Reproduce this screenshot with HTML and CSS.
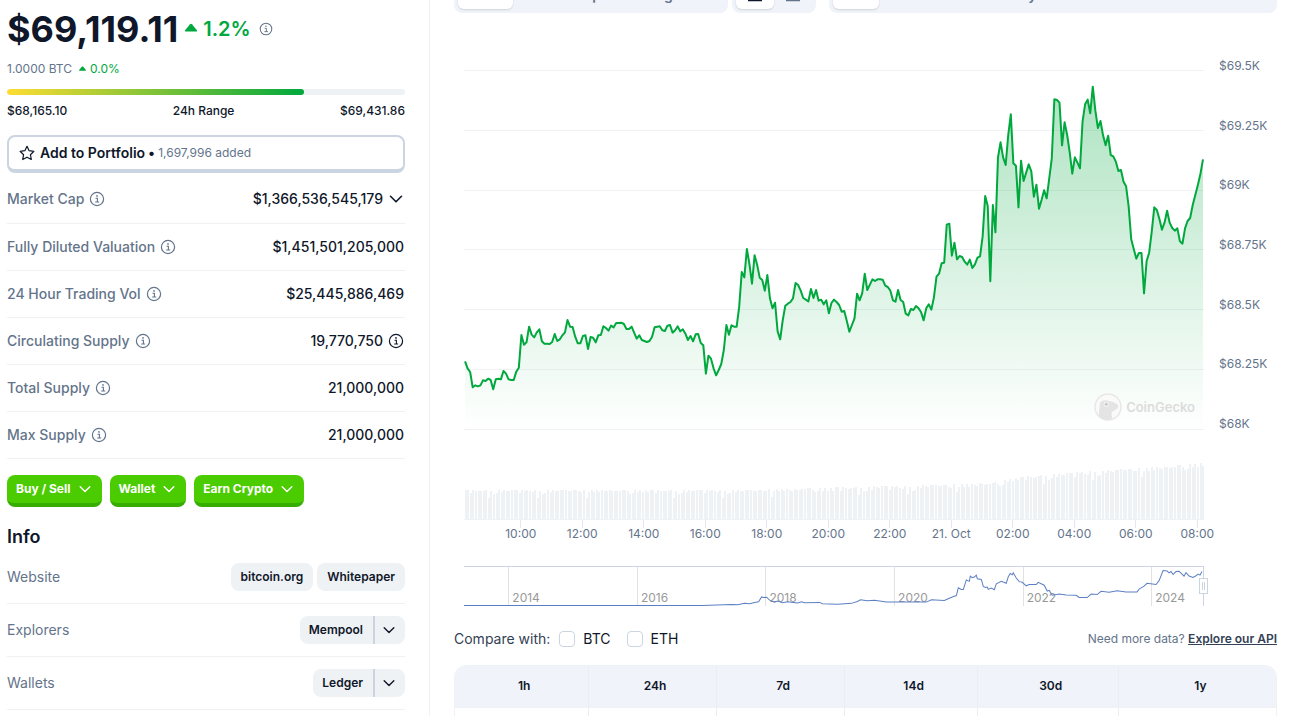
FILE: index.html
```html
<!DOCTYPE html>
<html lang="en">
<head>
<meta charset="utf-8">
<title>Bitcoin price</title>
<link rel="stylesheet" href="styles.css">
</head>
<body>
<svg class="defs" aria-hidden="true">
  <symbol id="info" viewBox="0 0 16 16"><circle cx="8" cy="8" r="6.600" fill="none" stroke="currentColor" stroke-width="1.2"/><path d="M6.500 7.200H8.400V11M6.200 11h4" fill="none" stroke="currentColor" stroke-width="1.1"/><circle cx="8" cy="4.900" r=".85" fill="currentColor"/></symbol>
  <symbol id="chevron" viewBox="0 0 16 16"><path d="M2.500 5.300 8 10.800l5.500-5.500" fill="none" stroke="currentColor" stroke-width="1.6" stroke-linecap="round" stroke-linejoin="round"/></symbol>
  <symbol id="caret" viewBox="0 0 16 10"><path d="M1.500 9.500Q.6 9.300 1.200 8.200L7 1.200Q8 .3 9 1.200L14.800 8.200Q15.400 9.300 14.500 9.500Z" fill="currentColor"/></symbol>
</svg>
<div class="page">
  <aside class="sidebar">
    <div class="price-row">
      <h1 class="price">$69,119.11</h1>
      <span class="change"><svg class="caret"><use href="#caret"/></svg>1.2%</span>
      <svg class="icon-info small"><use href="#info"/></svg>
    </div>
    <div class="btc-row"><span>1.0000 BTC</span><span class="change-small"><svg class="caret-small"><use href="#caret"/></svg>0.0%</span></div>
    <div class="range-bar"><div class="range-fill"></div></div>
    <div class="range-labels"><span>$68,165.10</span><span>24h Range</span><span>$69,431.86</span></div>
    <button class="portfolio" type="button">
      <svg class="star" viewBox="0 0 16 16"><path d="M8 1.300 10.100 5.700 14.900 6.300 11.400 9.700 12.300 14.500 8 12.200 3.700 14.500 4.600 9.700 1.100 6.300 5.900 5.700Z" fill="none" stroke="currentColor" stroke-width="1.2" stroke-linejoin="round"/></svg>
      <span>Add to Portfolio</span><span class="dot">•</span><span class="added">1,697,996 added</span>
    </button>
    <table class="stats">
      <tr><th scope="row"><span class="cell">Market Cap<svg class="icon-info"><use href="#info"/></svg></span></th><td><span class="cell end">$1,366,536,545,179<svg class="icon-info"><use href="#chevron"/></svg></span></td></tr>
      <tr><th scope="row"><span class="cell">Fully Diluted Valuation<svg class="icon-info"><use href="#info"/></svg></span></th><td>$1,451,501,205,000</td></tr>
      <tr><th scope="row"><span class="cell">24 Hour Trading Vol<svg class="icon-info"><use href="#info"/></svg></span></th><td>$25,445,886,469</td></tr>
      <tr><th scope="row"><span class="cell">Circulating Supply<svg class="icon-info"><use href="#info"/></svg></span></th><td><span class="cell end">19,770,750<svg class="icon-info"><use href="#info"/></svg></span></td></tr>
      <tr><th scope="row"><span class="cell">Total Supply<svg class="icon-info"><use href="#info"/></svg></span></th><td>21,000,000</td></tr>
      <tr><th scope="row"><span class="cell">Max Supply<svg class="icon-info"><use href="#info"/></svg></span></th><td>21,000,000</td></tr>
    </table>
    <div class="actions">
      <button class="action" type="button">Buy / Sell<svg class="chev"><use href="#chevron"/></svg></button>
      <button class="action" type="button">Wallet<svg class="chev"><use href="#chevron"/></svg></button>
      <button class="action" type="button">Earn Crypto<svg class="chev"><use href="#chevron"/></svg></button>
    </div>
    <h2 class="info-title">Info</h2>
    <div class="info-row"><span>Website</span><div class="pills"><a class="pill" href="#website">bitcoin.org</a><a class="pill" href="#whitepaper">Whitepaper</a></div></div>
    <div class="info-row"><span>Explorers</span><div class="split"><a class="pill first" href="#mempool">Mempool</a><button class="pill more" type="button" aria-label="More explorers"><svg class="chev-small"><use href="#chevron"/></svg></button></div></div>
    <div class="info-row"><span>Wallets</span><div class="split"><a class="pill first" href="#ledger">Ledger</a><button class="pill more" type="button" aria-label="More wallets"><svg class="chev-small"><use href="#chevron"/></svg></button></div></div>
  </aside>
  <main class="main">
    <div class="toolbar">
      <div class="group types"><button class="tab on" type="button">Price</button><button class="tab" type="button">Market Cap</button><button class="tab" type="button">TradingView</button></div>
      <div class="group styles">
        <button class="tab on" type="button" aria-label="Line chart"><svg class="tool" viewBox="0 0 14 14"><path d="M0 9.500h14M2 7l4-4 3 3 4-5" fill="none" stroke="currentColor" stroke-width="1.5"/></svg></button>
        <button class="tab" type="button" aria-label="Candle chart"><svg class="tool" viewBox="0 0 14 14"><path d="M0 9.500h14M3 1v6M7 2v5M11 1v6" fill="none" stroke="currentColor" stroke-width="1.5"/></svg></button>
      </div>
      <div class="group ranges"><button class="tab on" type="button">24h</button><button class="tab" type="button">7d</button><button class="tab" type="button">1m</button><button class="tab" type="button">3m</button><button class="tab" type="button">1y</button><button class="tab" type="button">Max</button><button class="tab" type="button">LOG</button>
        <button class="tab" type="button" aria-label="Pick dates"><svg class="tool" viewBox="0 0 14 14"><rect x="1.500" y="1" width="11" height="10" rx="2" fill="none" stroke="currentColor" stroke-width="1.5"/></svg></button>
        <button class="tab" type="button" aria-label="Download"><svg class="tool" viewBox="0 0 14 14"><path d="M1.500 7v2q0 2 2 2h7q2 0 2-2V7" fill="none" stroke="currentColor" stroke-width="1.5"/></svg></button>
        <button class="tab" type="button" aria-label="Full screen"><svg class="tool" viewBox="0 0 14 14"><path d="M3 7v4h3" fill="none" stroke="currentColor" stroke-width="1.5"/></svg></button>
      </div>
    </div>
    <section class="chart">
      <div class="plot">
        <div class="price-area">
          <div class="lines"><i></i><i></i><i></i><i></i><i></i><i></i><i></i></div>
          <svg class="layer" viewBox="0 0 288 1080" preserveAspectRatio="none" aria-label="Price over 24 hours">
            <defs><linearGradient id="fade" x1="0" y1="0" x2="0" y2="1"><stop offset="0" stop-color="#00a83e" stop-opacity=".32"/><stop offset="1" stop-color="#00a83e" stop-opacity="0"/></linearGradient></defs>
            <path id="price-fill" fill="url(#fade)"/><path id="price-line" class="price-line"/>
          </svg>
          <div class="watermark">
            <svg class="gecko" viewBox="0 0 28 28"><circle cx="14" cy="14" r="13" fill="#fafafa" stroke="#e8e8e8" stroke-width="1.500"/><path d="M5 23.500C4.500 17 6 14 5.800 11 6.500 8 10 6.800 13.500 7.500c3.500.7 8 2 10.500 4.200 1.300 2-1 4.600-4.500 6.300-3 1.300-2 4-1 7.300C14 28 8 27 5 23.500Z" fill="#e4e4e4"/><circle cx="12.300" cy="11.300" r="2.600" fill="#f3f3f3"/><circle cx="12.300" cy="11.300" r="1.500" fill="#c8c8c8"/></svg>
            <span>CoinGecko</span>
          </div>
        </div>
        <svg class="volume" viewBox="0 0 288 57" preserveAspectRatio="none" aria-label="Volume"><path id="volume-bars" class="bars"/></svg>
        <div class="hours"><span>10:00</span><span>12:00</span><span>14:00</span><span>16:00</span><span>18:00</span><span>20:00</span><span>22:00</span><span>21. Oct</span><span>02:00</span><span>04:00</span><span>06:00</span><span>08:00</span></div>
        <div class="navigator">
          <div class="years"><i></i><span>2014</span><span>2016</span><span>2018</span><span>2020</span><span>2022</span><span>2024</span></div>
          <svg class="layer" viewBox="0 0 740 40" preserveAspectRatio="none" aria-label="Price history"><path class="history" d="M0 39.500H238L268 38.500 274 38.700 281 37.300 286 37.600 291 36.300 295 35.700 298 30.700 300 31.300 303 31 306 34 311 36 314 35 319 36.700 324 35.700 334 37 338 35.700 341 36.700 356 36.300 359 37.700 374 38.300 388 37.300 394 35.300 397 33.700 404 34.700 411 34 423 36 463 36 468 33.700 481 34.300 486 32 489 30.700 493 29.300 495 21.300 498 23 500 23 503 13.300 506 14.700 507 9.300 509 11 511 10.300 513 8.300 514 12 518 12.700 520 20 522 21 524 20.500 525 23 528 21.500 531 23.300 533 17.300 538 14.700 543 16.700 545 10 547 6.700 549 8 550 6 553 11.300 556 15 559 15.700 563 19.300 566 18 573 18 575 15.700 581 18.700 584 24.700 586 24 589 29 596 27.700 603 28.700 613 29 616 31.300 624 31.300 628 27.700 634 28.300 638 25 646 26 654 24.300 663 25.700 674 25.700 676 22.700 681 19.700 684 16.700 693 18 696 14 698 9 700 3.700 704 4 706 6 708 4.500 710 7.700 713 4.700 716 4.300 719 7.300 721 9.300 723 5.700 726 9.300 730 10.700 733 9 735 7.300 737 8.300 739 4.700"/></svg>
          <div class="handle"></div>
        </div>
      </div>
      <div class="levels"><span>$69.5K</span><span>$69.25K</span><span>$69K</span><span>$68.75K</span><span>$68.5K</span><span>$68.25K</span><span>$68K</span></div>
    </section>
    <div class="compare">
      <span>Compare with:</span>
      <label class="check"><input type="checkbox">BTC</label>
      <label class="check"><input type="checkbox">ETH</label>
      <p class="api">Need more data? <a href="#api">Explore our API</a></p>
    </div>
    <div class="returns-box">
      <table class="returns">
        <colgroup><col class="c1"><col class="c2"><col class="c2"><col class="c1"><col class="c3"><col></colgroup>
        <thead><tr><th>1h</th><th>24h</th><th>7d</th><th>14d</th><th>30d</th><th>1y</th></tr></thead>
        <tbody><tr><td></td><td></td><td></td><td></td><td></td><td></td></tr></tbody>
      </table>
    </div>
  </main>
</div>
<script src="chart.js"></script>
</body>
</html>
```
FILE: styles.css
```css
* { box-sizing: border-box; }
body { margin: 0; background: #fff; color: #0f172a; font-family: Inter, "Liberation Sans", sans-serif; font-size: 14px; line-height: 20px; }
button { font: inherit; color: inherit; border: 0; background: none; padding: 0; }
h1, h2, p { margin: 0; }
.defs { display: none; }
.page { display: flex; height: 100vh; overflow: hidden; }

.sidebar { flex: 0 0 430px; padding: 8px 24px 0 7px; border-right: 1px solid #eff2f5; }
.price-row { display: flex; align-items: center; height: 42px; }
.price { font-size: 36px; line-height: 40px; font-weight: 700; }
.change { display: flex; align-items: center; gap: 5px; margin-left: 6px; color: #00a83e; font-size: 20px; line-height: 28px; font-weight: 600; }
.caret { width: 14px; height: 9px; margin-bottom: 3px; }
.icon-info { width: 16px; height: 16px; flex: none; }
.small { width: 14px; height: 14px; margin-left: 8px; color: #64748b; }
.btc-row { display: flex; gap: 6px; margin-top: 11px; font-size: 12px; line-height: 16px; color: #64748b; }
.change-small { display: flex; align-items: center; gap: 3px; color: #00a83e; }
.caret-small { width: 9px; height: 5px; margin-bottom: 2px; }
.range-bar { height: 6px; margin-top: 12px; border-radius: 3px; background: #eff2f5; overflow: hidden; }
.range-fill { width: 74.5%; height: 100%; border-radius: 3px; background: linear-gradient(90deg, #fedd32, #00a83e); }
.range-labels { display: flex; justify-content: space-between; margin-top: 8px; font-size: 12px; line-height: 16px; font-weight: 500; }
.portfolio { display: flex; align-items: center; width: 100%; height: 38px; margin-top: 16px; padding: 0 10px; border: 2px solid #cbd5e1; border-bottom-width: 4px; border-radius: 8px; font-weight: 600; }
.star { width: 16px; height: 16px; margin-right: 5px; }
.dot { margin: 0 3px; }
.added { font-size: 12px; font-weight: 400; color: #64748b; }

.stats { width: 100%; margin-top: 3px; border-collapse: collapse; }
.stats th, .stats td { height: 47px; padding: 0 1px 0 0; border-bottom: 1px solid #eff2f5; text-align: left; font-weight: 500; }
.stats th { color: #64748b; }
.stats td { text-align: right; }
.cell { display: flex; align-items: center; gap: 5px; }
.end { justify-content: flex-end; }
.actions { display: flex; gap: 8px; margin-top: 16px; }
.action { display: flex; align-items: center; gap: 7px; height: 32px; padding: 0 10px 0 9px; border-bottom: 4px solid #36ad00; border-radius: 8px; background: #4bcc00; color: #fff; font-size: 12px; font-weight: 700; }
.chev { width: 14px; height: 14px; }
.info-title { margin-top: 16px; font-size: 18px; line-height: 28px; font-weight: 600; }
.info-row { display: flex; align-items: center; justify-content: space-between; height: 53px; border-bottom: 1px solid #eff2f5; color: #64748b; }
.pills { display: flex; gap: 4px; }
.split { display: flex; }
.pill { display: flex; align-items: center; height: 28px; padding: 0 10px; border-radius: 8px; background: #eff2f5; color: #0f172a; font-size: 12px; font-weight: 600; text-decoration: none; }
.first { padding: 0 10px 0 9px; border-radius: 8px 0 0 8px; }
.more { border-left: 2px solid #cbd5e1; border-radius: 0 8px 8px 0; padding: 0 9px 0 7px; }
.chev-small { width: 14px; height: 14px; }

.main { flex: 1; min-width: 0; padding: 0 12px 0 24px; }
.toolbar { display: flex; align-items: flex-end; height: 13px; overflow: hidden; }
.group { display: flex; padding: 4px; border-radius: 8px; background: #f0f3f9; flex: none; }
.types { width: 274px; margin-right: 4px; }
.styles { margin-right: 13px; }
.ranges { flex: 1; justify-content: space-between; padding-right: 10px; }
.tab { display: flex; align-items: center; padding: 4px 10px; border-radius: 6px; color: #64748b; font-weight: 600; }
.on { background: #fff; color: #0f172a; box-shadow: 0 1px 2px #0002; }
.tool { width: 14px; height: 14px; }
.styles .tab { padding: 4px 12px; }

.chart { display: flex; gap: 15px; margin-top: 45px; padding-left: 10px; }
.plot { flex: 1; min-width: 0; padding-top: 12px; }
.price-area { position: relative; height: 360px; }
.lines { display: flex; flex-direction: column; justify-content: space-between; height: 100%; }
.lines i { border-top: 1px solid #eff2f5; }
.layer { position: absolute; inset: 0; width: 100%; height: 100%; overflow: visible; }
.price-line { fill: none; stroke: #00a83e; stroke-width: 2; stroke-linejoin: round; vector-effect: non-scaling-stroke; }
.watermark { position: absolute; right: 9px; bottom: 9px; display: flex; align-items: center; gap: 4px; color: #dcdcdc; font-size: 13px; font-weight: 600; }
.gecko { width: 28px; height: 28px; }
.volume { display: block; width: 100%; height: 57px; margin-top: 33px; border-bottom: 1px solid #eff2f5; }
.bars { fill: #eff2f5; shape-rendering: crispEdges; }
.hours { display: flex; margin: 0 -24px 0 26px; height: 22px; font-size: 12px; line-height: 16px; color: #64748b; }
.hours span { flex: 1; display: flex; flex-direction: column; align-items: center; justify-content: flex-end; background: linear-gradient(#e2e8f0, #e2e8f0) center top / 1px 8px no-repeat; white-space: nowrap; }
.navigator { position: relative; height: 40px; margin-top: 24px; border-top: 1px solid #cbd5e1; border-right: 1px solid #cbd5e1; }
.years { display: grid; grid-template-columns: 6% repeat(5, 17.4%) 1fr; height: 100%; font-size: 12px; line-height: 16px; color: #999; }
.years span { display: flex; align-items: flex-end; padding-left: 3px; border-left: 1px solid #e2e2e2; }
.history { fill: none; stroke: #5c7fc4; stroke-width: 1; vector-effect: non-scaling-stroke; }
.handle { position: absolute; right: -5px; top: 11px; width: 9px; height: 16px; border: 1px solid #cbd5e1; background: linear-gradient(90deg, #cbd5e1 1px, #fff 1px 2px, #cbd5e1 2px) center / 3px 8px no-repeat #fff; }
.levels { display: flex; flex-direction: column; justify-content: space-between; width: 58px; height: 374px; font-size: 12px; line-height: 16px; color: #64748b; }

.compare { display: flex; align-items: center; gap: 9px; margin-top: 23px; color: #334155; }
.check { display: flex; align-items: center; gap: 8px; margin-right: 7px; color: #0f172a; }
.check input { appearance: none; width: 16px; height: 16px; margin: 0; border: 1px solid #cbd5e1; border-radius: 4px; background: #fff; }
.api { margin-left: auto; font-size: 12px; color: #64748b; }
.api a { color: #334155; font-weight: 600; }
.returns-box { margin-top: 16px; border: 1px solid #eff2f5; border-radius: 12px; overflow: hidden; }
.returns { width: 100%; table-layout: fixed; border-collapse: collapse; font-size: 12px; line-height: 20px; }
.returns th { height: 41px; padding: 0 0 0 6px; background: #f0f3f9; font-weight: 600; }
.returns td { height: 44px; }
.returns th, .returns td { border-bottom: 1px solid #eff2f5; border-right: 1px solid #eaeef3; }
.returns th:last-child, .returns td:last-child { border-right: 0; }
.c1 { width: 16.2%; }
.c2 { width: 15.6%; }
.c3 { width: 17.2%; }
```
FILE: chart.js
```js
// Depth below $69.5K, 1080 units from $69.5K to $68K; each block has its own base.
const blocks = [
  { base: 690, points: [184,205,216,262,256,259,256,241,243,236,240,268,238,236,238,213,221,238,240,240,215,203,105,134,127,80,104,112,97,88,124,131,131,132,126,102,123,118,106,97,60,80,81,110,130,130,108,106,147,111,113,127,106,105,79,84,92,77,82,69,69,68,72,87,87,80,98,116,106,120,123,126,123,110,82,80,79,91,93,77,75,98,91,79,94,88,101,120,108,124,103,102,129,136,221,167,176,205,226,210,192,150] },
  { base: 480, points: [285,314,286,290,290,230,126,142,57,102,161,76,104,143,150,182,135,205,235,218,304,328,270,227,221,216,205,159,165,182,204,209,214,177,204,180,212,209,223,211,250,219,209,216,225,245,243,273,305,285,265,191,211,190,131,180,164,148,153,148,148,149,167,171,182,211,215,180,210,216,251,256,237,240,228,235,247,271,235,223,239,202] },
  { base: 0, points: [620,611,580,578,464,461,557,518,568,558,561,575,584,569,594,583,563,559,500,378,408,634,405,487,262,217,262,285,195,133,280,287,412,272,333,308,283,304,380,344,416,390,361,385,325,265,88,90,98,226,157,195,247,311,262,278,295,155,103,89,130,50,122,174,153,196,226,197,255,259,275,303,300,335,349,410,508,538,566,549,549,670,574,548,485,412,420,447,479,458,422,458,474,482,475,514,521,475,453,444,405,375,345,312,268] }
];
const prices = blocks.flatMap(b => b.points.map(p => p + b.base));
const first = 0.4;
const step = (287.6 - first) / (prices.length - 1);
const line = prices.map((y, i) => (first + i * step).toFixed(2) + " " + y).join("L");
document.getElementById("price-line").setAttribute("d", "M" + line);
document.getElementById("price-fill").setAttribute("d", "M" + line + "V1078H" + first + "Z");

// Volume envelope: [position, height]
const envelope = [[0,30],[110,30],[150,33],[185,35],[205,37],[215,43],[245,49],[270,53],[288,57]];
const dips = [0,1,0,0,4,3,1,0,2,0,9,0,0,2,4,1,2,1,3,3,0,0,1,3,5,0,0];
function level(x) {
  const k = envelope.findIndex(p => p[0] > x);
  const a = envelope[k - 1], b = envelope[k];
  return a[1] + (b[1] - a[1]) * (x - a[0]) / (b[0] - a[0]);
}
let bars = "";
for (let i = 0; i < 288; i++) {
  const h = Math.round(level(i)) - dips[(i * 7 + (i >> 3)) % dips.length];
  bars += "M" + i + ".3 57V" + (57 - h) + "h.78V57Z";
}
document.getElementById("volume-bars").setAttribute("d", bars);
```
